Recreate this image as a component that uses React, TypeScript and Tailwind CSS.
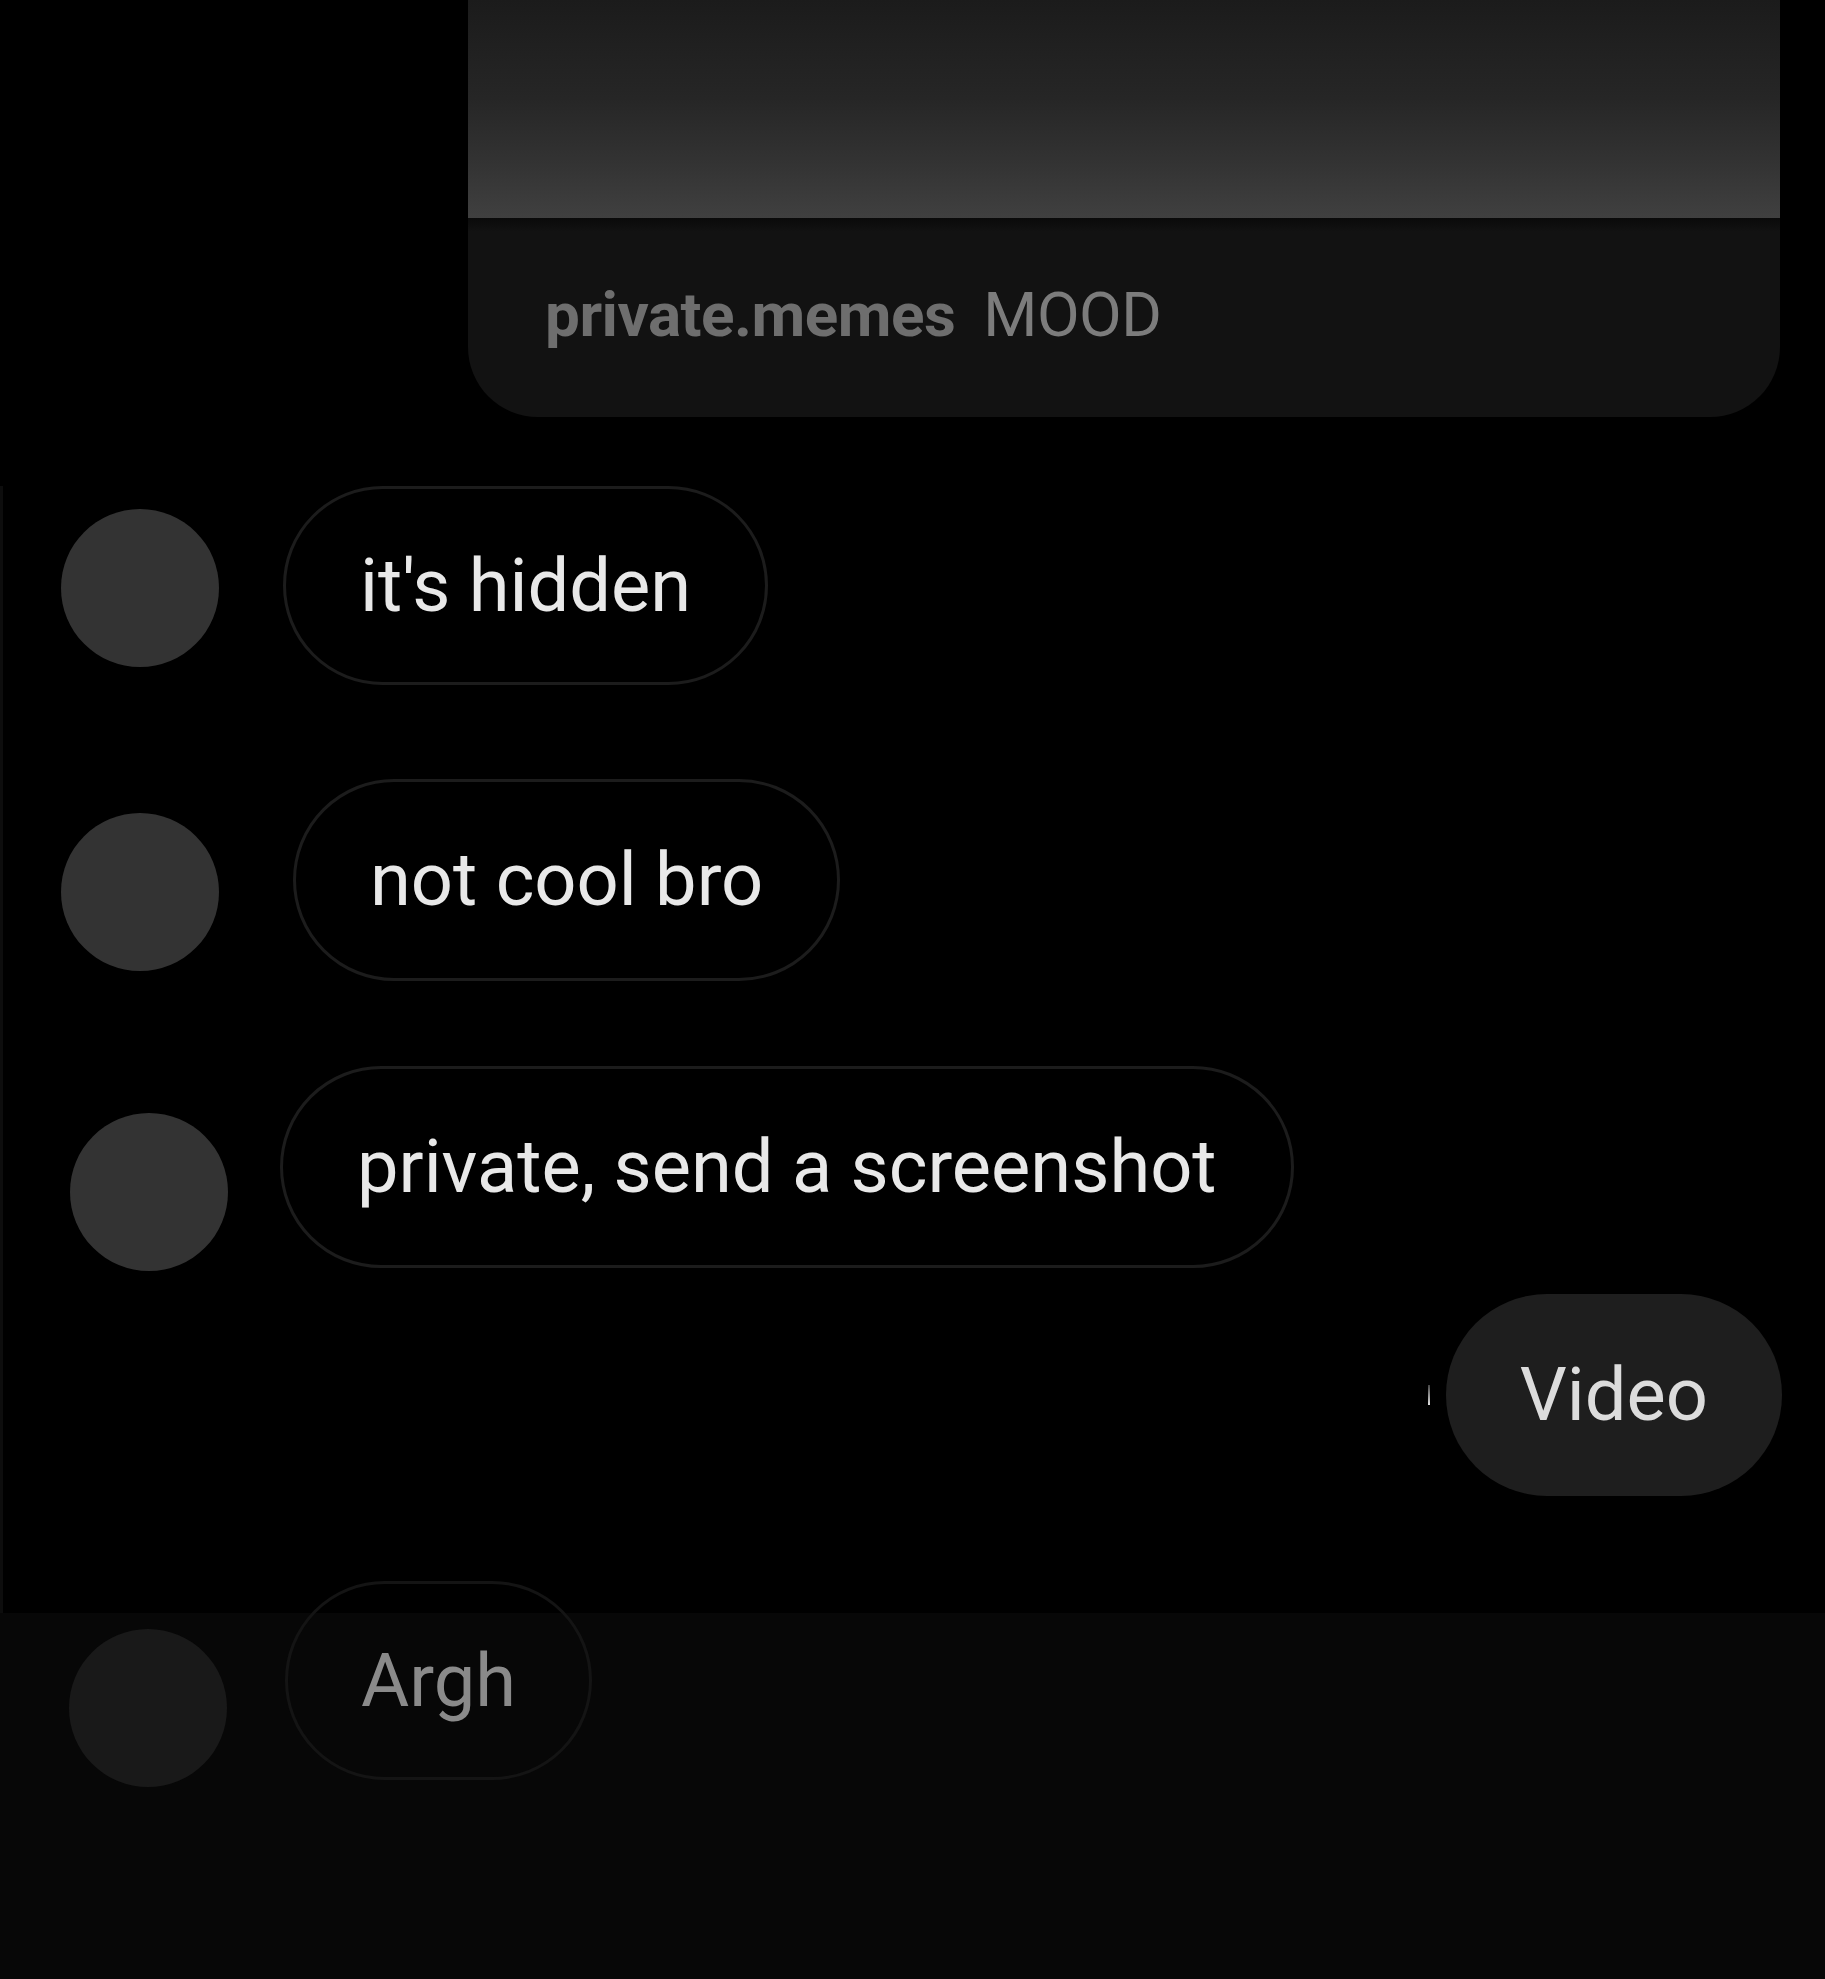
const incoming = [
  { text: "it's hidden", gap: "mt-[69px]", avatarLeft: "ml-[58px]", avatarTop: "mt-[23px]", bubbleGap: "ml-[64px]", height: "h-[199px]" },
  { text: "not cool bro", gap: "mt-[94px]", avatarLeft: "ml-[58px]", avatarTop: "mt-[34px]", bubbleGap: "ml-[74px]", height: "h-[202px]" },
  { text: "private, send a screenshot", gap: "mt-[85px]", avatarLeft: "ml-[67px]", avatarTop: "mt-[47px]", bubbleGap: "ml-[52px]", height: "h-[202px]" },
] as const;

function PostCard() {
  return (
    <div className="ml-[468px] w-[1312px] overflow-hidden rounded-b-[70px] bg-[#121212]">
      <div className="h-[218px] bg-[linear-gradient(180deg,#1b1b1b_0%,#262626_45%,#333333_75%,#404040_100%)]" />
      <div className="h-[14px] bg-[linear-gradient(180deg,#0a0a0a,#121212)]" />
      <div className="flex h-[185px] items-start gap-[28px] pl-[77px] pt-[52px] text-[62px] leading-none tracking-[-0.5px]">
        <span className="font-bold text-[#6e6e6e]">private.memes</span>
        <span className="text-[#7c7c7c]">MOOD</span>
      </div>
    </div>
  );
}

export default function App() {
  return (
    <div className="min-h-[1979px] w-full bg-[linear-gradient(180deg,#000_1613px,#070707_1613px)] font-['Roboto','Liberation_Sans',sans-serif] text-[74px] leading-none">
      <PostCard />

      <div className="border-l-[3px] border-[#0d0d0d] pb-[117px]">
        {incoming.map((m) => (
          <div key={m.text} className={`flex items-start ${m.gap}`}>
            <div className={`h-[158px] w-[158px] shrink-0 rounded-full bg-[#333333] ${m.avatarLeft} ${m.avatarTop}`} />
            <div
              className={`flex items-center rounded-full border-[3px] border-[#1c1c1c] bg-black px-[74px] text-[#e8e8e8] ${m.height} ${m.bubbleGap}`}
            >
              {m.text}
            </div>
          </div>
        ))}

        <div className="mt-[23px] flex items-center justify-end gap-[16px] pr-[43px]">
          <span className="h-[20px] w-[2px] bg-[linear-gradient(180deg,#444,#e0e0e0)]" />
          <div className="flex h-[202px] items-center rounded-full bg-[#1e1e1e] px-[74px] text-[#dcdcdc]">
            Video
          </div>
        </div>
      </div>

      <div className="-mt-[32px] flex items-start">
        <div className="ml-[69px] mt-[48px] h-[158px] w-[158px] shrink-0 rounded-full bg-[#191919]" />
        <div className="ml-[58px] flex h-[199px] items-center rounded-full border-[3px] border-[#141414] px-[73px] text-[#8a8a8a]">
          Argh
        </div>
      </div>
    </div>
  );
}
